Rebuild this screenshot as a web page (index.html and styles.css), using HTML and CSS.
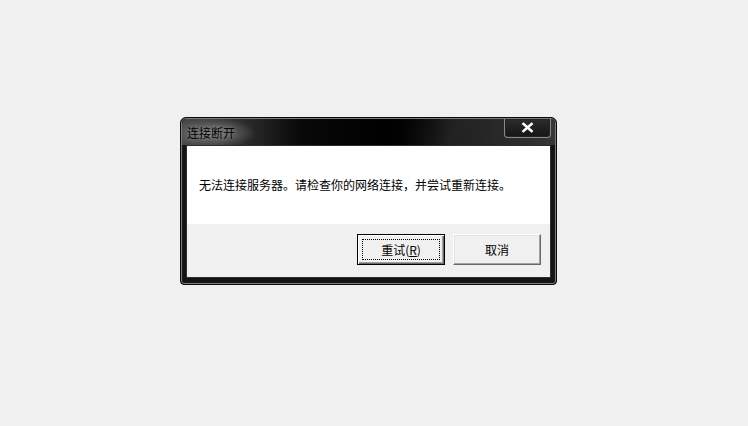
FILE: index.html
```html
<!DOCTYPE html>
<html lang="zh-CN">
<head>
<meta charset="utf-8">
<link rel="stylesheet" href="styles.css">
</head>
<body>
<div class="window">
  <div class="titlebar">
    <span class="title">连接断开</span>
    <div class="close">
      <svg width="13" height="11" viewBox="0 0 13 11"><path d="M2.5 2 L10.5 9 M10.5 2 L2.5 9" stroke="#fff" stroke-width="2.6" stroke-linecap="square"/></svg>
    </div>
  </div>
  <div class="client">
    <div class="message">无法连接服务器。请检查你的网络连接，并尝试重新连接。</div>
    <div class="actions">
      <button class="btn btn-default"><span class="focus">重试(<u>R</u>)</span></button>
      <button class="btn"><span class="label">取消</span></button>
    </div>
  </div>
</div>
</body>
</html>
```

FILE: styles.css
```css
html, body {
  margin: 0;
  padding: 0;
  background: #f0f0f0;
  width: 748px;
  height: 426px;
  overflow: hidden;
}
body {
  padding: 117px 0 0 180px;
  box-sizing: border-box;
  font-family: "Noto Sans CJK SC", "Noto Sans", sans-serif;
  font-size: 12px;
}
.window {
  width: 377px;
  height: 168px;
  box-sizing: border-box;
  border: 1px solid #0a0a0a;
  border-radius: 6px 6px 4px 4px;
  background: #141414;
  box-shadow: inset 0 0 0 1px #7a7a7a, inset 0 0 0 2px #1c1c1c;
  padding: 0 5px 6px 5px;
  display: flex;
  flex-direction: column;
}
.titlebar {
  height: 26px;
  display: flex;
  align-items: flex-start;
  justify-content: space-between;
  margin: 1px -4px 0 -4px;
  padding: 0 0 0 3px;
  border-radius: 5px 5px 0 0;
  background:
    radial-gradient(ellipse 42px 15px at 32px 14px, rgba(140,140,140,0.8), rgba(110,110,110,0) 100%),
    linear-gradient(105deg, rgba(255,255,255,0) 60%, rgba(90,90,90,0.22) 72%, rgba(255,255,255,0) 86%),
    linear-gradient(90deg, #4a4a4a 0%, #2e2e2e 16%, #080808 32%, #000 55%, #0a0a0a 68%, #262626 84%, #363636 100%);
}
.title {
  color: #000;
  line-height: 28px;
  padding: 0 2px;
  text-shadow: 0 0 4px rgba(170,170,170,0.7);
}
.close {
  width: 47px;
  height: 19px;
  margin-right: 4px;
  box-sizing: border-box;
  border: 1px solid #8a8a8a;
  border-top: none;
  border-radius: 0 0 4px 4px;
  background: linear-gradient(#2c2c2c, #161616);
  box-shadow: inset 0 0 0 1px #222;
  display: flex;
  align-items: center;
  justify-content: center;
}
.close svg { display: block; margin-top: -1px; }
.client {
  flex: 1;
  border: 1px solid #2e2e2e;
  background: #f0f0f0;
  display: flex;
  flex-direction: column;
}
.message {
  height: 78px;
  background: #fff;
  color: #000;
  padding-left: 12px;
  display: flex;
  align-items: center;
  padding-bottom: 2px;
  box-sizing: border-box;
}
.actions {
  display: flex;
  justify-content: flex-end;
  gap: 8px;
  padding: 10px 9px 0 0;
}
.btn {
  width: 88px;
  height: 31px;
  margin: 0;
  padding: 0;
  font: inherit;
  color: #000;
  background: #f0f0f0;
  border: 1px solid;
  border-color: #fff #6a6a6a #6a6a6a #fff;
  box-shadow: inset -1px -1px 0 #a0a0a0, inset 1px 1px 0 #e3e3e3;
  display: flex;
  align-items: center;
  justify-content: center;
}
.btn-default {
  border: 1px solid #000;
  box-shadow: inset 1px 1px 0 #fff, inset -1px -1px 0 #6a6a6a, inset -2px -2px 0 #a0a0a0;
}
.focus {
  width: 78px;
  height: 21px;
  box-sizing: border-box;
  border: 1px dotted #000;
  display: flex;
  align-items: center;
  justify-content: center;
  line-height: 1;
}
.label { line-height: 1; }
u { text-decoration: underline; text-underline-offset: 1px; }
```
